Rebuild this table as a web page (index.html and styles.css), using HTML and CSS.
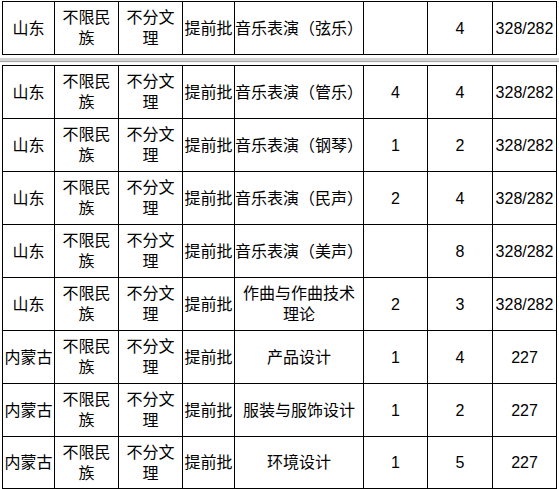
FILE: index.html
```html
<!DOCTYPE html>
<html lang="zh-CN">
<head>
<meta charset="utf-8">
<title>招生计划</title>
<link rel="stylesheet" href="styles.css">
</head>
<body>
<div class="sheet">
  <div class="grid grid-top">
    <div class="c">山东</div><div class="c">不限民<br>族</div><div class="c">不分文<br>理</div><div class="c">提前批</div><div class="c">音乐表演（弦乐）</div><div class="c num"></div><div class="c num">4</div><div class="c num">328/282</div>
  </div>
  <div class="sep"></div>
  <div class="grid grid-main">
    <div class="c">山东</div><div class="c">不限民<br>族</div><div class="c">不分文<br>理</div><div class="c">提前批</div><div class="c">音乐表演（管乐）</div><div class="c num">4</div><div class="c num">4</div><div class="c num">328/282</div>
    <div class="c">山东</div><div class="c">不限民<br>族</div><div class="c">不分文<br>理</div><div class="c">提前批</div><div class="c">音乐表演（钢琴）</div><div class="c num">1</div><div class="c num">2</div><div class="c num">328/282</div>
    <div class="c">山东</div><div class="c">不限民<br>族</div><div class="c">不分文<br>理</div><div class="c">提前批</div><div class="c">音乐表演（民声）</div><div class="c num">2</div><div class="c num">4</div><div class="c num">328/282</div>
    <div class="c">山东</div><div class="c">不限民<br>族</div><div class="c">不分文<br>理</div><div class="c">提前批</div><div class="c">音乐表演（美声）</div><div class="c num"></div><div class="c num">8</div><div class="c num">328/282</div>
    <div class="c">山东</div><div class="c">不限民<br>族</div><div class="c">不分文<br>理</div><div class="c">提前批</div><div class="c">作曲与作曲技术<br>理论</div><div class="c num">2</div><div class="c num">3</div><div class="c num">328/282</div>
    <div class="c">内蒙古</div><div class="c">不限民<br>族</div><div class="c">不分文<br>理</div><div class="c">提前批</div><div class="c">产品设计</div><div class="c num">1</div><div class="c num">4</div><div class="c num">227</div>
    <div class="c">内蒙古</div><div class="c">不限民<br>族</div><div class="c">不分文<br>理</div><div class="c">提前批</div><div class="c">服装与服饰设计</div><div class="c num">1</div><div class="c num">2</div><div class="c num">227</div>
    <div class="c">内蒙古</div><div class="c">不限民<br>族</div><div class="c">不分文<br>理</div><div class="c">提前批</div><div class="c">环境设计</div><div class="c num">1</div><div class="c num">5</div><div class="c num">227</div>
  </div>
</div>
</body>
</html>
```
FILE: styles.css
```css
html, body {
  margin: 0;
  padding: 0;
  background: #ffffff;
}

.sheet {
  width: 559px;
  height: 489px;
  overflow: hidden;
  padding-top: 1px;
  box-sizing: border-box;
}

.grid {
  display: grid;
  grid-template-columns: 51px 63px 63px 51px 128px 63px 64px 63px;
  gap: 1px;
  background: #000000;
  border: 1px solid #000000;
  width: max-content;
  margin-left: 2px;
}

.grid-top {
  grid-template-rows: 52px;
}

.grid-main {
  grid-template-rows: repeat(7, 52px) 51px;
}

.c {
  background: #ffffff;
  display: flex;
  align-items: center;
  justify-content: center;
  text-align: center;
  white-space: nowrap;
  padding-bottom: 2px;
  box-sizing: border-box;
  font-family: "Noto Sans CJK SC", "Noto Sans", sans-serif;
  font-size: 16px;
  line-height: 21px;
  color: #000000;
}

.num {
  font-family: "Liberation Sans", Arial, sans-serif;
  font-size: 16px;
  padding-bottom: 0;
}

.sep {
  height: 10px;
  width: 559px;
  background: linear-gradient(to bottom,
    #ffffff 0px, #ffffff 3px,
    #d2d2d2 3px, #d2d2d2 6px,
    #a8a8a8 6px, #a8a8a8 7px,
    #ececec 7px, #ffffff 8px, #ffffff 10px);
}
```
